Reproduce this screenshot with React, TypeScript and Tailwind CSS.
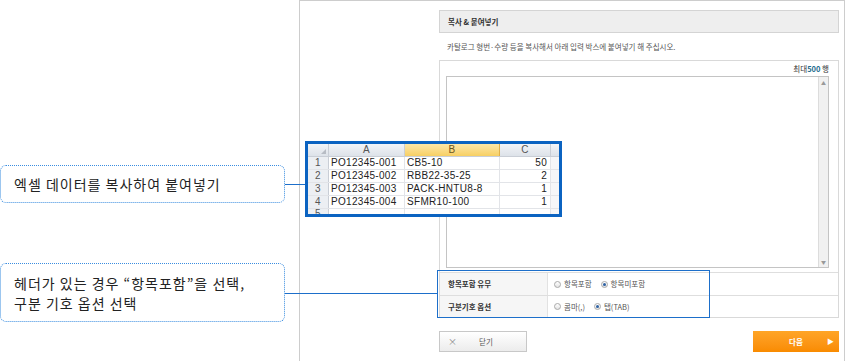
import React from 'react';

const ko = "font-['Noto_Sans_CJK_KR','Noto_Sans',sans-serif]";

const Radio = ({ checked }: { checked?: boolean }) => (
  <span className="flex h-[7px] w-[7px] items-center justify-center rounded-full border border-[#a9a9a9] bg-gradient-to-b from-white to-[#e4e4e4]">
    {checked && <span className="h-[3px] w-[3px] rounded-full bg-[#2f62a3]" />}
  </span>
);

const OptionRow = ({
  label,
  options,
  last,
}: {
  label: string;
  options: { text: string; checked?: boolean }[];
  last?: boolean;
}) => (
  <div className={`flex border-t border-[#dedede] ${last ? 'h-[22px]' : 'h-[23px]'}`}>
    <div className="flex w-[108px] items-center border-r border-[#e2e2e2] bg-[#f6f6f6] pl-[8px] text-[7.5px] font-bold text-[#333]">
      {label}
    </div>
    <div className="flex items-center gap-[9px] pl-[6px] text-[7.5px] text-[#555]">
      {options.map((o) => (
        <span key={o.text} className="flex items-center gap-[3px]">
          <Radio checked={o.checked} />
          {o.text}
        </span>
      ))}
    </div>
  </div>
);

const rows = [
  ['1', 'PO12345-001', 'CB5-10', '50'],
  ['2', 'PO12345-002', 'RBB22-35-25', '2'],
  ['3', 'PO12345-003', 'PACK-HNTU8-8', '1'],
  ['4', 'PO12345-004', 'SFMR10-100', '1'],
];

const ExcelSnippet = () => (
  <div className="absolute left-[305px] top-[141px] h-[76px] w-[257px] overflow-hidden border-[3px] border-[#0b63c1] bg-white font-['Liberation_Sans',sans-serif] text-[10px] tracking-[0.3px] text-[#222]">
    <div className="flex h-[13px] border-b border-[#c9ced6] bg-gradient-to-b from-[#f3f5f8] to-[#dde2e9] text-[#555]">
      <div className="relative w-[21px] border-r border-[#c9ced6]">
        <span className="absolute bottom-[2px] right-[2px] h-0 w-0 border-b-[5px] border-l-[5px] border-b-[#b7bcc4] border-l-transparent" />
      </div>
      <div className="flex w-[76px] items-center justify-center border-r border-[#c9ced6] leading-none">A</div>
      <div className="flex w-[95px] items-center justify-center border-r border-[#e0b04a] bg-gradient-to-b from-[#fde7a6] to-[#f7cf62] leading-none text-[#6b5420]">
        B
      </div>
      <div className="flex w-[51px] items-center justify-center border-r border-[#c9ced6] leading-none">C</div>
      <div className="w-[8px]" />
    </div>
    {rows.map((r) => (
      <div key={r[0]} className="flex h-[13px] border-b border-[#e2e4e8]">
        <div className="flex w-[21px] items-center justify-center border-r border-[#c9ced6] bg-[#eceff3] leading-none text-[#555]">
          {r[0]}
        </div>
        <div className="flex w-[76px] items-center border-r border-[#e2e4e8] pl-[2px] leading-none">{r[1]}</div>
        <div className="flex w-[95px] items-center border-r border-[#e2e4e8] pl-[2px] leading-none">{r[2]}</div>
        <div className="flex w-[51px] items-center justify-end border-r border-[#e2e4e8] pr-[3px] leading-none">{r[3]}</div>
        <div className="w-[8px] bg-[#f5f6f8]" />
      </div>
    ))}
    <div className="flex h-[6px]">
      <div className="w-[21px] overflow-hidden border-r border-[#c9ced6] bg-[#eceff3] text-center leading-[9px] text-[#555]">5</div>
      <div className="w-[76px] border-r border-[#e2e4e8]" />
      <div className="w-[95px] border-r border-[#e2e4e8]" />
      <div className="w-[51px] border-r border-[#e2e4e8]" />
      <div className="w-[8px] bg-[#f5f6f8]" />
    </div>
  </div>
);

export default function App() {
  return (
    <div className={`relative h-[361px] w-[849px] overflow-hidden bg-white ${ko}`}>
      {/* captured dialog */}
      <div className="ml-[299px] h-[400px] w-[546px] border-l border-r border-t border-[#cdcdcd] pl-[139px] pt-[9px]">
        <div className="w-[400px]">
          <div className="flex h-[23px] items-center border border-[#d4d4d4] bg-[#eeeeee] pl-[8px] text-[7.5px] font-bold text-[#333]">
            복사 &amp; 붙여넣기
          </div>
          <div className="flex h-[27px] items-center pl-[8px] text-[7.5px] text-[#555]">
            카탈로그 형번·수량 등을 복사해서 아래 입력 박스에 붙여넣기 해 주십시오.
          </div>

          <div className="border border-[#d9d9d9]">
            <div className="flex h-[15px] items-center justify-end pr-[9px] text-[7.5px] text-[#333]">
              최대<span className="font-bold text-[#1d6b8c]">500</span>&nbsp;행
            </div>
            <div className="ml-[6px] mr-[9px] flex h-[192px] border border-[#c4c4c4] bg-white">
              <div className="flex-1" />
              <div className="flex w-[10px] flex-col items-center justify-between border-l border-[#dcdcdc] bg-[#f1f1f1] py-[3px] text-[5px] leading-none text-[#999]">
                <span>▲</span>
                <span>▼</span>
              </div>
            </div>
            <div className="mt-[4px]">
              <OptionRow
                label="항목포함 유무"
                options={[{ text: '항목포함' }, { text: '항목미포함', checked: true }]}
              />
              <OptionRow
                label="구분기호 옵션"
                options={[{ text: '콤마(,)' }, { text: '탭(TAB)', checked: true }]}
                last
              />
            </div>
          </div>

          <div className="mt-[13px] flex items-center justify-between">
            <button className="flex h-[21px] w-[88px] items-center border border-[#c8c8c8] bg-gradient-to-b from-white to-[#ececec] pl-[8px] text-[7.5px] text-[#555]">
              <span className="text-[9px] leading-none text-[#888]">×</span>
              <span className="ml-[22px]">닫기</span>
            </button>
            <button className="relative flex h-[21px] w-[86px] items-center justify-center bg-gradient-to-b from-[#ffa526] to-[#f98b00] text-[7.5px] font-bold text-white">
              다음
              <span className="absolute right-[5px] text-[7px] leading-none">▶</span>
            </button>
          </div>
        </div>
      </div>

      <ExcelSnippet />

      {/* highlight around options */}
      <div className="absolute left-[437px] top-[270px] h-[48px] w-[273px] border-[1.5px] border-[#1d6fca]" />

      {/* connectors */}
      <div className="absolute left-[284px] top-[184px] h-px w-[21px] bg-[#1d6fca]" />
      <div className="absolute left-[284px] top-[293px] h-px w-[153px] bg-[#1d6fca]" />

      {/* callouts */}
      <div className="absolute left-0 top-[165px] flex h-[38px] w-[285px] items-center rounded-[6px] border border-dotted border-[#3a8de0] bg-white pl-[13px] text-[14px] tracking-[1px] text-[#222]">
        엑셀 데이터를 복사하여 붙여넣기
      </div>
      <div className="absolute left-0 top-[263px] flex h-[59px] w-[285px] flex-col justify-center rounded-[6px] border border-dotted border-[#3a8de0] bg-white pl-[13px] text-[14px] leading-[20px] tracking-[1px] text-[#222]">
        <span>헤더가 있는 경우 “항목포함”을 선택,</span>
        <span>구분 기호 옵션 선택</span>
      </div>
    </div>
  );
}
